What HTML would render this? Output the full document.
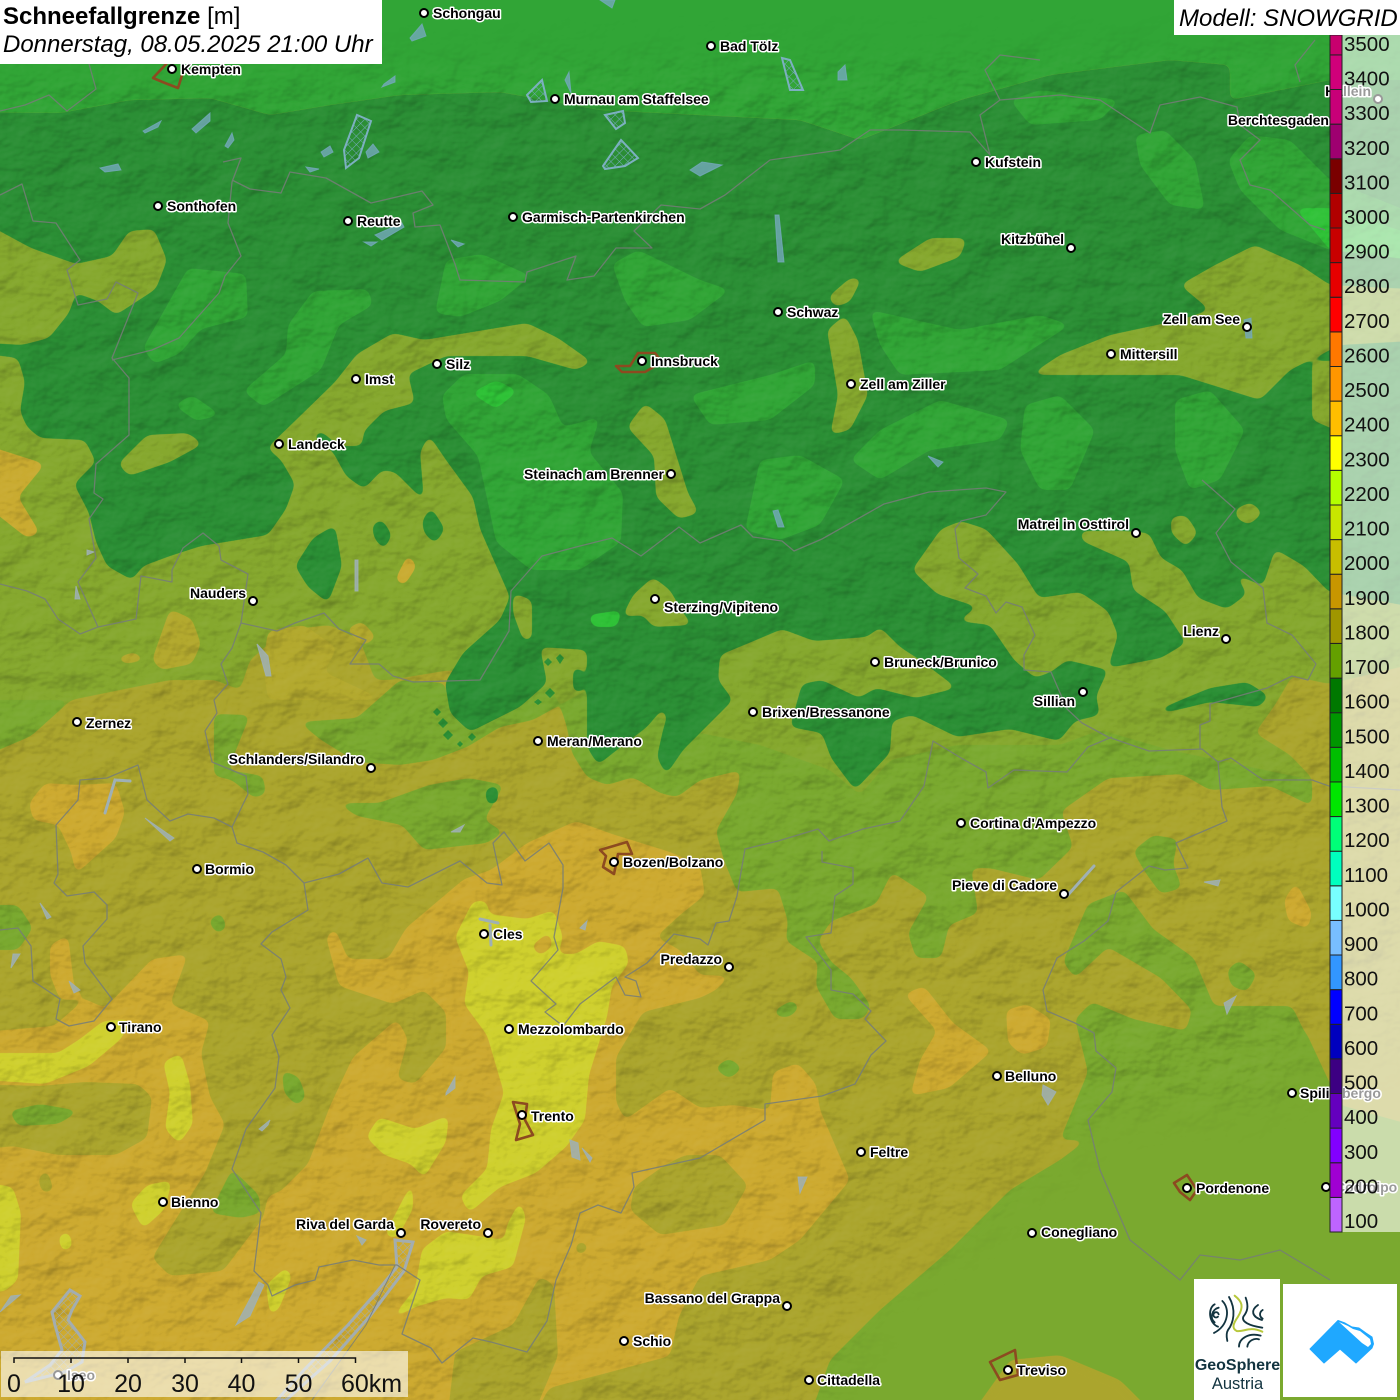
<!DOCTYPE html>
<html lang="de"><head><meta charset="utf-8"><title>Schneefallgrenze</title>
<style>
html,body{margin:0;padding:0;background:#fff;width:1400px;height:1400px;overflow:hidden}
svg{display:block;overflow:hidden}
.lb text{font:bold 14px "Liberation Sans",sans-serif;fill:#000;stroke:#fff;stroke-width:3px;paint-order:stroke;stroke-linejoin:round}
.lb circle{fill:#fff;stroke:#000;stroke-width:2}
.lg text{font:20.5px "Liberation Sans",sans-serif;fill:#111}
.lg rect{stroke:#222;stroke-width:1}
.sc text{font:25px "Liberation Sans",sans-serif;fill:#111}
</style></head><body>
<svg width="1400" height="1400" viewBox="0 0 1400 1400" xmlns="http://www.w3.org/2000/svg">
<defs>
<filter id="r" filterUnits="userSpaceOnUse" x="-60" y="-60" width="1520" height="1520" color-interpolation-filters="sRGB">
<feGaussianBlur stdDeviation="4"/><feComponentTransfer><feFuncA type="linear" slope="14" intercept="-6.5"/></feComponentTransfer>
</filter>
<filter id="hd" filterUnits="userSpaceOnUse" x="0" y="0" width="1400" height="1400" color-interpolation-filters="sRGB">
<feTurbulence type="fractalNoise" baseFrequency="0.022 0.028" numOctaves="4" seed="11"/>
<feDiffuseLighting surfaceScale="4" diffuseConstant="1" lighting-color="#fff"><feDistantLight azimuth="235" elevation="52"/></feDiffuseLighting>
<feColorMatrix values="0 0 0 0 0  0 0 0 0 0  0 0 0 0 0  -2 0 0 0 1.58"/>
</filter>
<filter id="hl" filterUnits="userSpaceOnUse" x="0" y="0" width="1400" height="1400" color-interpolation-filters="sRGB">
<feTurbulence type="fractalNoise" baseFrequency="0.022 0.028" numOctaves="4" seed="11"/>
<feDiffuseLighting surfaceScale="4" diffuseConstant="1" lighting-color="#fff"><feDistantLight azimuth="235" elevation="52"/></feDiffuseLighting>
<feColorMatrix values="0 0 0 0 1  0 0 0 0 1  0 0 0 0 1  2 0 0 0 -1.58"/>
</filter>
<filter id="bl" filterUnits="userSpaceOnUse" x="-60" y="-60" width="1520" height="1520"><feGaussianBlur stdDeviation="22"/></filter>
<mask id="mt" maskUnits="userSpaceOnUse" x="0" y="0" width="1400" height="1400"><polygon filter="url(#bl)" fill="#fff" points="-50,70 1450,50 1450,1060 1320,1040 1280,1100 1100,1110 1030,1180 950,1240 870,1300 800,1450 -50,1450"/></mask>
<pattern id="mesh" width="6" height="6" patternUnits="userSpaceOnUse" patternTransform="rotate(45)"><path d="M0 0H6M0 0V6" stroke="#74a9bb" stroke-width="1"/></pattern>
<pattern id="mesh2" width="6" height="6" patternUnits="userSpaceOnUse" patternTransform="rotate(45)"><path d="M0 0H6M0 0V6" stroke="#a3adb0" stroke-width="1"/></pattern>
</defs>

<!-- base -->
<rect width="1400" height="1400" fill="#aba52d"/>

<!-- gold -->
<g filter="url(#r)" fill="#cdaa30">
<polygon points="-30,1033 54,1026 85,999 105,1008 152,959 188,954 170,1004 210,1021 201,1053 210,1097 225,1124 205,1173 174,1222 152,1258 170,1276 223,1271 263,1218 268,1196 281,1191 308,1164 330,1106 353,1057 397,1019 408,1039 397,1079 415,1084 446,1048 446,1012 424,990 393,1004 339,986 326,937 335,928 348,959 388,959 406,928 464,879 491,870 527,843 576,821 612,834 670,852 700,865 705,895 680,915 656,937 680,950 700,975 730,976 716,990 700,998 643,1012 616,1057 616,1102 625,1120 670,1088 700,1108 733,1105 770,1110 773,1072 798,1063 816,1084 820,1110 850,1180 800,1240 770,1260 700,1276 679,1316 670,1356 603,1374 549,1388 527,1430 -30,1430"/>
<polygon points="29,803 45,783 76,785 116,783 125,812 116,838 76,874 71,852 58,825 33,820"/>
<polygon points="50,945 68,935 74,985 85,999 60,1000 50,975"/>
<polygon points="904,994 924,986 953,1023 992,1051 949,1088 910,1096 920,1060 937,1031"/>
<polygon points="1006,1010 1027,1004 1051,1019 1047,1047 1022,1055 1008,1043"/>
<polygon points="1296,882 1312,913 1308,929 1288,921 1284,900"/>
<polygon points="1247,631 1280,611 1308,615 1310,627 1284,662 1269,643"/>
</g>
<g filter="url(#r)" fill="#aba52d">
<polygon points="446,1430 455,1352 513,1325 540,1276 554,1285 558,1356 527,1430"/>
<polygon points="634,1187 665,1165 685,1155 720,1155 748,1185 725,1225 660,1235 630,1210"/>
<polygon points="-30,1084 40,1086 85,1082 138,1084 152,1097 147,1138 116,1155 58,1155 13,1146 -30,1151"/>
<polygon points="38,1178 47,1169 54,1191 42,1193"/>
<polygon points="574,1249 580,1240 590,1247 580,1256"/>
<polygon points="700,910 730,895 760,905 770,950 740,990 715,965"/>
</g>

<!-- north olive -->
<g filter="url(#r)" fill="#86a82e">
<polygon points="-30,-30 1430,-30 1430,660 1329,684 1292,676 1275,705 1255,733 1290,755 1312,778 1312,806 1271,786 1210,790 1182,774 1108,778 1061,811 1073,847 1039,880 990,868 971,868 978,913 949,925 941,958 916,958 908,933 929,896 892,872 876,904 831,921 818,941 831,962 851,978 871,1006 863,1019 835,1019 816,986 818,962 786,941 788,921 778,888 737,892 724,860 716,831 737,794 741,770 700,780 677,797 660,793 633,777 607,785 587,777 572,753 567,727 560,705 530,690 450,670 390,680 375,680 360,640 330,625 285,630 250,660 240,690 215,680 170,680 120,690 71,700 31,736 -30,762"/>
</g>
<g filter="url(#r)" fill="#b3a92e">
<polygon points="268,631 304,625 337,648 324,672 384,700 268,700 263,664"/>
<polygon points="152,660 170,609 192,619 201,644 192,664 161,670"/>
<polygon points="115,658 134,652 147,660 125,664"/>
<polygon points="346,629 362,621 377,638 362,646"/>
</g>
<g filter="url(#r)" fill="#c9ab30">
<polygon points="-30,440 45,464 18,497 40,533 27,538 -30,493"/>
<polygon points="395,580 408,554 417,566 404,586"/>
</g>

<!-- greens -->
<g filter="url(#r)" fill="#7aa92f">
<polygon points="1312,806 1271,786 1210,790 1182,774 1108,778 1061,811 1073,847 1039,880 990,868 971,868 978,913 949,925 941,958 916,958 908,933 929,896 892,872 876,904 831,921 818,941 831,962 851,978 871,1006 863,1019 835,1019 816,986 818,962 786,941 788,921 778,888 737,892 724,860 716,831 737,794 741,770 700,780 677,797 660,793 633,777 607,785 587,777 572,753 567,727 560,705 587,690 700,733 760,745 830,770 860,795 890,760 957,745 1060,745 1100,730 1170,750 1312,780"/>
<polygon points="400,680 445,683 450,713 470,732 520,707 547,683 560,705 533,720 500,727 467,747 433,760 400,765 357,762 321,740 299,722 357,718"/>
<polygon points="214,714 250,715 228,770 263,776 266,794 254,798 232,780 214,776"/>
<polygon points="-30,700 71,700 31,736 -30,762"/>
<polygon points="337,803 379,803 429,785 469,778 504,785 484,820 504,832 487,843 424,850 402,825 357,816"/>
<polygon points="-30,905 18,905 33,928 18,950 -30,950"/>
<polygon points="9,1111 40,1104 80,1111 58,1124 18,1126"/>
<polygon points="282,1070 299,1077 306,1097 297,1106 284,1093"/>
<polygon points="208,921 221,912 227,928 217,934"/>
<polygon points="210,1213 232,1169 259,1195 261,1213 241,1218"/>
<polygon points="1133,851 1153,835 1178,839 1173,864 1182,888 1161,894 1145,872"/>
<polygon points="1227,970 1239,960 1257,974 1247,992 1231,986"/>
<polygon points="773,1011 792,1000 800,1007 790,1017 778,1017"/>
<polygon points="714,1068 729,1058 743,1068 729,1079"/>
<polygon points="1075,978 1063,962 1088,904 1124,890 1153,929 1194,958 1214,1006 1292,1006 1304,1031 1305,1140 1060,1140 1088,1072 1075,1019 1092,1002 1133,1019 1186,1031 1192,1010 1161,978 1108,947"/>
<polygon points="1430,1130 1340,1105 1305,1030 1292,1130 1180,1125 1100,1130 1060,1160 1010,1190 950,1250 880,1310 830,1360 805,1430 1430,1430"/>
</g>
<g filter="url(#r)" fill="#aba52d"><polygon points="1010,1360 1060,1355 1120,1380 1170,1430 960,1430"/></g>

<!-- yellow -->
<g filter="url(#r)" fill="#cfd02e">
<polygon points="455,937 473,901 487,901 489,914 527,919 554,910 563,937 558,954 576,954 598,941 625,946 629,963 612,986 607,1017 589,1075 585,1120 567,1146 536,1173 500,1187 469,1213 460,1196 487,1169 491,1129 504,1093 487,1035 464,1004 469,972"/>
<polygon points="366,1137 379,1117 415,1129 449,1115 446,1142 424,1178 411,1164 384,1155"/>
<polygon points="-30,1053 58,1053 80,1039 103,1021 132,1019 121,1039 89,1066 45,1084 -30,1079"/>
<polygon points="163,1062 181,1053 190,1084 193,1124 179,1144 165,1129 170,1093"/>
<polygon points="130,1204 147,1185 172,1180 165,1209 143,1229"/>
<polygon points="-30,1180 13,1187 21,1213 18,1280 4,1292 -30,1290"/>
<polygon points="58,1236 69,1231 73,1247 62,1252"/>
<polygon points="384,1236 413,1180 413,1209 397,1238"/>
<polygon points="393,1316 415,1289 422,1249 446,1231 504,1240 507,1225 520,1200 526,1218 513,1267 482,1276 469,1300 446,1298 415,1307 395,1318"/>
<polygon points="266,1285 286,1267 292,1276 279,1309 270,1316"/>
</g>
<g filter="url(#r)" fill="#cdaa30"><polygon points="531,946 549,932 553,946 540,956"/></g>

<!-- dark 1600 -->
<g filter="url(#r)" fill="#2b8f35">
<polygon points="-30,112 60,113 130,100 210,98 270,115 330,105 400,95 500,92 600,110 700,115 800,120 860,140 960,100 1050,75 1170,60 1230,65 1230,100 1330,80 1430,75 1430,610 1329,592 1304,566 1275,549 1263,586 1235,574 1247,594 1227,609 1198,598 1182,570 1161,558 1149,533 1124,531 1080,531 1082,541 1129,562 1133,590 1165,611 1186,643 1161,658 1108,668 1118,635 1108,611 1080,592 1039,598 1018,564 986,529 961,521 941,529 912,570 937,594 978,607 957,621 990,625 1014,660 1035,678 1051,672 1067,660 1108,670 1096,696 1100,715 1075,721 1059,741 1010,729 957,737 912,715 892,721 890,753 855,790 831,758 822,733 790,727 802,684 822,680 859,698 876,688 916,698 957,688 920,660 900,647 880,627 867,637 814,641 782,629 749,643 720,655 718,680 733,700 700,733 683,750 666,775 657,757 663,730 667,717 663,708 647,727 613,753 598,765 587,747 587,650 540,647 547,683 520,707 470,732 450,713 445,683 463,653 500,620 510,597 480,529 473,497 446,460 429,435 420,452 424,501 395,472 382,470 364,489 346,476 333,452 312,436 321,431 339,446 362,446 364,431 384,411 415,403 408,374 446,356 527,356 576,370 592,362 558,338 527,323 424,340 393,333 357,354 335,382 297,419 267,448 281,460 295,484 286,509 268,535 201,546 170,556 143,566 132,580 107,566 96,542 89,513 74,484 96,462 85,440 40,438 27,427 20,411 25,382 18,358 -30,352"/>
<polygon points="1159,709 1210,688 1247,682 1269,696 1259,707 1210,702 1165,713"/>
<polygon points="295,566 313,538 335,525 342,566 328,603 308,587"/>
<polygon points="372,525 382,519 392,535 384,550 374,538"/>
<polygon points="422,521 431,507 445,529 435,544 424,533"/>
<polygon points="573,667 583,670 583,692 573,692"/>
<polygon points="485,789 498,785 498,803 487,805"/>
</g>
<g fill="#2b8f35">
<polygon points="437,708 441,712 437,716 433,712"/><polygon points="443,718 448,723 443,728 438,723"/><polygon points="448,730 453,735 448,740 443,735"/><polygon points="472,733 476,737 472,741 468,737"/><polygon points="460,741 463,744 460,747 457,744"/><polygon points="548,658 552,662 548,666 544,662"/><polygon points="560,654 564,658 560,664 556,658"/><polygon points="550,688 555,693 550,698 545,693"/><polygon points="538,699 542,702 538,705 534,702"/>
</g>
<!-- olive on dark -->
<g filter="url(#r)" fill="#86a82e">
<polygon points="-30,215 31,248 76,264 112,256 129,231 154,229 167,260 156,289 116,315 98,301 76,293 69,313 49,338 22,345 -30,342"/>
<polygon points="118,464 147,435 188,433 203,444 170,462 129,476"/>
<polygon points="1180,285 1215,265 1255,245 1300,265 1330,285 1430,290 1430,340 1340,345 1290,370 1260,400 1180,375 1115,375 1030,375 1060,355 1110,335 1180,320 1210,310"/>
<polygon points="1312,362 1340,360 1340,432 1312,420"/>
<polygon points="893,262 930,238 967,238 960,257 920,272"/>
<polygon points="828,297 850,278 862,278 850,302 835,307"/>
<polygon points="827,330 845,315 858,340 868,395 850,430 830,435 838,395"/>
<polygon points="627,427 645,403 665,419 688,493 699,513 679,519 656,497 654,456"/>
<polygon points="622,617 633,595 653,577 670,590 683,613 693,625 653,627 643,615"/>
<polygon points="513,593 532,600 532,640 523,640 513,613"/>
<polygon points="1171,517 1186,515 1198,533 1186,547 1171,533"/>
<polygon points="1235,509 1251,502 1263,513 1249,525 1237,519"/>
</g>

<!-- light 1500 -->
<g filter="url(#r)" fill="#31a536">
<polygon points="-30,-30 1430,-30 1430,80 1330,80 1230,100 1230,65 1170,60 1050,75 960,100 860,140 800,120 700,115 600,110 500,92 400,95 330,105 270,115 210,98 130,100 60,113 -30,112"/>
<polygon points="442,395 464,374 518,374 549,395 563,427 600,417 589,452 623,493 621,542 580,570 531,570 496,542 491,517 478,456 446,419"/>
<polygon points="612,264 638,250 700,280 730,290 690,320 643,327 625,301"/>
<polygon points="243,391 286,354 288,325 313,291 368,289 373,305 339,325 321,370 263,407"/>
<polygon points="143,348 188,268 246,274 248,317 201,329 179,354 154,364"/>
<polygon points="435,313 446,260 482,254 531,276 500,301 460,317"/>
<polygon points="870,310 960,330 1040,315 1070,325 1000,370 900,375 880,345"/>
<polygon points="690,395 770,375 815,360 815,385 770,420 710,425"/>
<polygon points="760,460 800,455 845,480 820,525 780,540 745,530"/>
<polygon points="1025,405 1060,395 1095,430 1070,490 1040,490 1020,450"/>
<polygon points="1175,400 1210,390 1245,430 1220,480 1190,490 1175,450"/>
<polygon points="850,460 880,430 940,400 1010,420 1000,440 930,450 880,480"/>
<polygon points="174,405 192,395 221,415 196,421"/>
<polygon points="1135,135 1165,130 1195,160 1205,210 1170,205 1140,165"/>
<polygon points="1228,160 1250,135 1290,140 1330,180 1430,220 1430,260 1330,250 1280,230 1240,190"/>
<polygon points="1010,100 1040,90 1120,100 1100,120 1030,125"/>
</g>
<g filter="url(#r)" fill="#2fc237">
<polygon points="471,393 496,380 518,391 496,409"/>
<polygon points="1295,208 1330,208 1430,240 1430,262 1330,250"/>
<polygon points="588,615 622,610 617,627 593,627"/>
</g>

<!-- hillshade -->
<g mask="url(#mt)">
<rect width="1400" height="1400" filter="url(#hd)" opacity=".3"/>
<rect width="1400" height="1400" filter="url(#hl)" opacity=".12"/>
</g>

<!-- lakes -->
<g fill="#74a9bb" fill-opacity=".8" stroke="#74a9bb" stroke-opacity=".8">
<polygon points="143,131 161,121 158,127 145,133"/>
<polygon points="192,129 210,113 210,121 196,133"/>
<polygon points="225,146 232,133 234,140 228,148"/>
<polygon points="100,168 118,164 121,170 105,172"/>
<polygon points="321,152 330,146 333,152 324,157"/>
<polygon points="366,152 373,144 379,152 368,158"/>
<polygon points="306,167 319,169 310,172"/>
<polygon points="384,84 395,76 395,82 382,87"/>
<polygon points="410,38 422,24 426,36 412,41"/>
<polygon points="565,80 569,72 571,93"/>
<polygon points="838,72 845,65 847,80 838,80"/>
<polygon points="690,170 702,162 722,165 700,176"/>
<polygon points="775,215 779,215 784,262 778,262"/>
<polygon points="600,0 615,0 612,8"/>
<polygon points="375,235 402,223 404,227 382,240"/>
<polygon points="364,242 377,242 371,246"/>
<polygon points="451,240 464,244 458,247"/>
<polygon points="928,456 943,462 938,467"/>
<polygon points="773,511 778,510 784,527 778,527"/>
<polygon points="1244,320 1251,318 1252,338 1246,338"/>
</g>
<g fill="url(#mesh)" stroke="#7cb0c0" stroke-width="2">
<polygon points="344,150 357,115 371,121 359,158 346,168"/>
<polygon points="527,95 542,80 547,101 531,102"/>
<polygon points="605,115 623,111 625,123 616,129"/>
<polygon points="603,166 621,140 638,158 625,166 605,169"/>
<polygon points="782,58 790,60 803,90 790,90"/>
</g>
<g fill="#9fb0b5" stroke="#9fb0b5" fill-opacity=".85" stroke-opacity=".85">
<polygon points="355,560 358,560 358,591 355,591"/>
<polygon points="257,644 268,656 271,676 266,676"/>
<polygon points="76,586 80,599 75,599"/>
<polygon points="87,550 94,552 87,555"/>
<polygon points="145,818 174,838 170,841"/>
<polygon points="451,832 464,825 460,832"/>
<polygon points="40,903 51,917 47,919"/>
<polygon points="13,954 20,954 11,968"/>
<polygon points="69,981 80,990 74,993"/>
<polygon points="446,1093 455,1077 455,1088 446,1095"/>
<polygon points="259,1129 270,1120 268,1125 262,1131"/>
<polygon points="580,928 587,921 585,930"/>
<polygon points="570,1140 578,1143 580,1160 572,1157"/>
<polygon points="582,1148 592,1158 590,1162"/>
<polygon points="357,1236 366,1240 362,1245"/>
<polygon points="259,1282 264,1285 250,1316 236,1325"/>
<polygon points="0,1312 11,1296 20,1295"/>
<polygon points="1204,882 1220,880 1218,886"/>
<polygon points="1224,1003 1236,996 1227,1014"/>
<polygon points="798,1177 807,1177 800,1193"/>
<polygon points="1043,1085 1056,1092 1048,1105 1042,1095"/>
</g>
<g fill="none" stroke="#9fb0b5" stroke-width="3" stroke-linecap="round">
<path d="M105 813L115 780 130 781"/><path d="M480 919L498 923M490 925L491 945"/><path d="M1067 896L1094 866"/>
</g>
<g fill="url(#mesh2)" stroke="#a3adb0" stroke-width="3">
<polygon points="395,1240 413,1242 404,1271 370,1316 330,1361 286,1400 277,1400 304,1370 348,1325 375,1294 397,1267"/>
<polygon points="70,1290 80,1296 72,1310 68,1320 85,1342 82,1362 65,1372 25,1382 50,1365 62,1350 55,1325 52,1312"/>
</g>

<!-- borders -->
<g fill="none" stroke="#767d78" stroke-width="1.300" stroke-linejoin="round" opacity=".85">
<path d="M0 195L22 184 33 221 56 223 80 260 67 270 78 305 107 299 116 282 138 293 112 358 129 378 129 435 96 464 94 493 103 499 89 519 96 558 78 582 98 627 80 634 58 619 45 599 27 591 0 584"/>
<path d="M89 64L96 89 67 111 49 95 25 105 0 111"/>
<path d="M223 162L241 158 232 182 228 223 241 256 225 276 219 293 179 338 152 350 112 360"/>
<path d="M232 180L250 189 281 193 290 172 326 178 371 203 422 191 433 205 413 213 415 227 440 225 455 264 460 280 525 282 527 272 576 256 567 280 594 276 616 248 652 248 634 231 661 205 700 209 725 195 770 160 840 150 870 130 900 130 970 132 990 155 980 115 1000 100 1060 95 1100 100 1150 133 1160 105 1200 97 1237 107 1240 125 1260 140 1240 160 1250 185 1270 190 1310 225 1325 230"/>
<path d="M1000 100L985 70 1000 55 1040 60"/><path d="M1300 82L1295 65 1315 40"/>
<path d="M219 546L203 533 183 548 172 570 172 582 141 576 136 619 98 627"/>
<path d="M219 546L221 560 248 574 241 623 232 648 221 664 228 684 214 700 217 713 205 731 212 762 246 776 248 794 232 827"/>
<path d="M241 623L277 631 295 623 324 613 339 629 366 640 350 664 379 664 393 676 413 682 480 680 509 631 511 591 542 556 580 546 612 538 641 556 679 527 700 543 741 525 753 537 782 541 794 551 822 539 884 504 929 492 986 488 1006 492 986 515 961 521 955 529 959 558 978 574 965 588 986 596 996 613 1006 602 1022 607 1035 635 1024 655 1024 670 1051 672 1067 709 1082 723 1108 737 1149 751 1202 749 1218 762 1231 758 1263 780 1312 780 1329 786 1400 790"/>
<path d="M1202 480L1235 509 1216 533 1231 562 1263 588 1267 623 1292 635 1316 664 1308 680 1292 676 1267 688 1210 704 1210 721 1200 725 1200 749"/>
<path d="M232 827L214 818 188 814 170 821 147 800 138 765 107 778 80 780 78 800 56 825 58 874 54 883 67 896 94 892 107 905 107 919 83 946 85 963 112 999 94 1021 69 1026 56 1019 60 999 33 981 31 946 18 928 0 930"/>
<path d="M232 827L237 843 263 852 286 865 304 883 308 910 272 932 261 944 281 959 286 977 281 990 290 1008 272 1035 279 1057 275 1088 246 1129 232 1169 261 1213 254 1271 268 1285 272 1296 295 1285 315 1280 319 1267 353 1260 379 1265 397 1265 420 1280 402 1334 431 1348 442 1363 473 1338 491 1342 527 1352 547 1321 556 1280 571 1245 580 1213 598 1205 621 1213 634 1187 632 1173 700 1158 765 1120 765 1104 822 1096 855 1084 871 1055 886 1041 865 1019 871 1011 853 994 831 990 831 970 806 937 831 933 835 896 853 884 853 868 822 862 822 851"/>
<path d="M304 883L339 874 368 858 382 883 408 887 420 881 460 861 487 883 502 885 493 843 504 832 525 861 549 843 563 865 563 888 554 937 558 950 531 981 556 1004 545 1012 563 1026 580 1004 616 977 625 995 641 997 636 981 625 977 647 963 674 934 700 939 708 945 716 923 729 921 737 896 741 872 745 849 778 841 818 829 829 841 863 829 900 821 924 786 933 741 961 758 986 772 988 788 1014 770 1067 772 1088 747 1112 737"/>
<path d="M1218 762L1222 807 1227 821 1176 843 1188 868 1165 870 1149 866 1116 892 1108 921 1084 941 1057 958 1043 990 1047 1011 1075 1023 1094 1033 1096 1051 1116 1068 1112 1092 1088 1120 1100 1170 1130 1240 1180 1280 1200 1255 1240 1260 1280 1250 1330 1280"/>
<path d="M395 1265L366 1325 312 1400" stroke-width="1"/>
</g>

<!-- city outlines -->
<g fill="none" stroke="#8c4a20" stroke-width="2.600" stroke-linejoin="round">
<path d="M168 62L153 78 165 83 178 88 183 72"/>
<path d="M616 366L630 366 638 353 655 353 662 362 645 372 622 372z"/>
<path d="M600 850L627 842 632 854 618 854 614 874 603 867 606 856z"/>
<path d="M513 1102L527 1104 525 1120 533 1135 516 1140 520 1124z"/>
<path d="M1174 1183L1187 1175 1197 1190 1190 1200 1180 1192z"/>
<path d="M990 1362L1015 1350 1018 1375 1000 1380z"/>
</g>

<!-- cities -->
<g class="lb">
<circle cx="424" cy="13" r="4"/><text x="433" y="18">Schongau</text>
<circle cx="711" cy="46" r="4"/><text x="720" y="51">Bad Tölz</text>
<circle cx="172" cy="69" r="4"/><text x="181" y="74">Kempten</text>
<circle cx="555" cy="99" r="4"/><text x="564" y="104">Murnau am Staffelsee</text>
<circle cx="1378" cy="99" r="4"/><text x="1371" y="96" text-anchor="end">Hallein</text>
<text x="1329" y="125" text-anchor="end">Berchtesgaden</text>
<circle cx="976" cy="162" r="4"/><text x="985" y="167">Kufstein</text>
<circle cx="158" cy="206" r="4"/><text x="167" y="211">Sonthofen</text>
<circle cx="348" cy="221" r="4"/><text x="357" y="226">Reutte</text>
<circle cx="513" cy="217" r="4"/><text x="522" y="222">Garmisch-Partenkirchen</text>
<circle cx="1071" cy="248" r="4"/><text x="1064" y="244" text-anchor="end">Kitzbühel</text>
<circle cx="778" cy="312" r="4"/><text x="787" y="317">Schwaz</text>
<circle cx="1247" cy="327" r="4"/><text x="1240" y="324" text-anchor="end">Zell am See</text>
<circle cx="1111" cy="354" r="4"/><text x="1120" y="359">Mittersill</text>
<circle cx="642" cy="361" r="4"/><text x="651" y="366">Innsbruck</text>
<circle cx="437" cy="364" r="4"/><text x="446" y="369">Silz</text>
<circle cx="356" cy="379" r="4"/><text x="365" y="384">Imst</text>
<circle cx="851" cy="384" r="4"/><text x="860" y="389">Zell am Ziller</text>
<circle cx="279" cy="444" r="4"/><text x="288" y="449">Landeck</text>
<circle cx="671" cy="474" r="4"/><text x="664" y="479" text-anchor="end">Steinach am Brenner</text>
<circle cx="1136" cy="533" r="4"/><text x="1129" y="529" text-anchor="end">Matrei in Osttirol</text>
<circle cx="253" cy="601" r="4"/><text x="246" y="598" text-anchor="end">Nauders</text>
<circle cx="655" cy="599" r="4"/><text x="664" y="612">Sterzing/Vipiteno</text>
<circle cx="1226" cy="639" r="4"/><text x="1219" y="636" text-anchor="end">Lienz</text>
<circle cx="875" cy="662" r="4"/><text x="884" y="667">Bruneck/Brunico</text>
<circle cx="1083" cy="692" r="4"/><text x="1075" y="706" text-anchor="end">Sillian</text>
<circle cx="753" cy="712" r="4"/><text x="762" y="717">Brixen/Bressanone</text>
<circle cx="77" cy="722" r="4"/><text x="86" y="728">Zernez</text>
<circle cx="538" cy="741" r="4"/><text x="547" y="746">Meran/Merano</text>
<circle cx="371" cy="768" r="4"/><text x="364" y="764" text-anchor="end">Schlanders/Silandro</text>
<circle cx="961" cy="823" r="4"/><text x="970" y="828">Cortina d'Ampezzo</text>
<circle cx="614" cy="862" r="4"/><text x="623" y="867">Bozen/Bolzano</text>
<circle cx="197" cy="869" r="4"/><text x="205" y="874">Bormio</text>
<circle cx="1064" cy="894" r="4"/><text x="1057" y="890" text-anchor="end">Pieve di Cadore</text>
<circle cx="484" cy="934" r="4"/><text x="493" y="939">Cles</text>
<circle cx="729" cy="967" r="4"/><text x="722" y="964" text-anchor="end">Predazzo</text>
<circle cx="111" cy="1027" r="4"/><text x="119" y="1032">Tirano</text>
<circle cx="509" cy="1029" r="4"/><text x="518" y="1034">Mezzolombardo</text>
<circle cx="997" cy="1076" r="4"/><text x="1005" y="1081">Belluno</text>
<circle cx="1292" cy="1093" r="4"/><text x="1300" y="1098">Spilimbergo</text>
<circle cx="522" cy="1115" r="4"/><text x="531" y="1121">Trento</text>
<circle cx="861" cy="1152" r="4"/><text x="870" y="1157">Feltre</text>
<circle cx="1187" cy="1188" r="4"/><text x="1196" y="1193">Pordenone</text>
<circle cx="1326" cy="1187" r="4"/><text x="1335" y="1192">Codroipo</text>
<circle cx="163" cy="1202" r="4"/><text x="171" y="1207">Bienno</text>
<circle cx="401" cy="1233" r="4"/><text x="394" y="1229" text-anchor="end">Riva del Garda</text>
<circle cx="488" cy="1233" r="4"/><text x="481" y="1229" text-anchor="end">Rovereto</text>
<circle cx="1032" cy="1233" r="4"/><text x="1041" y="1237">Conegliano</text>
<circle cx="787" cy="1306" r="4"/><text x="780" y="1303" text-anchor="end">Bassano del Grappa</text>
<circle cx="624" cy="1341" r="4"/><text x="633" y="1346">Schio</text>
<circle cx="1008" cy="1370" r="4"/><text x="1017" y="1375">Treviso</text>
<circle cx="809" cy="1380" r="4"/><text x="817" y="1385">Cittadella</text>
<circle cx="58" cy="1375" r="4"/><text x="67" y="1380">Iseo</text>
</g>

<!-- legend -->
<rect x="1342" y="35" width="58" height="1197" fill="#fff" opacity=".6"/>
<g class="lg">
<rect x="1330" y="1197.4" width="12" height="34.6" fill="#be64ff"/><text x="1344" y="1228">100</text>
<rect x="1330" y="1162.8" width="12" height="34.6" fill="#a000d2"/><text x="1344" y="1193.4">200</text>
<rect x="1330" y="1128.1" width="12" height="34.6" fill="#8200ff"/><text x="1344" y="1158.8">300</text>
<rect x="1330" y="1093.5" width="12" height="34.6" fill="#6400be"/><text x="1344" y="1124.1">400</text>
<rect x="1330" y="1058.9" width="12" height="34.6" fill="#3c0082"/><text x="1344" y="1089.5">500</text>
<rect x="1330" y="1024.3" width="12" height="34.6" fill="#0000be"/><text x="1344" y="1054.9">600</text>
<rect x="1330" y="989.7" width="12" height="34.6" fill="#0000ff"/><text x="1344" y="1020.3">700</text>
<rect x="1330" y="955" width="12" height="34.6" fill="#3296ff"/><text x="1344" y="985.7">800</text>
<rect x="1330" y="920.4" width="12" height="34.6" fill="#78beff"/><text x="1344" y="951">900</text>
<rect x="1330" y="885.8" width="12" height="34.6" fill="#78ffff"/><text x="1344" y="916.4">1000</text>
<rect x="1330" y="851.2" width="12" height="34.6" fill="#00ffbe"/><text x="1344" y="881.8">1100</text>
<rect x="1330" y="816.6" width="12" height="34.6" fill="#00ff78"/><text x="1344" y="847.2">1200</text>
<rect x="1330" y="781.9" width="12" height="34.6" fill="#00e600"/><text x="1344" y="812.6">1300</text>
<rect x="1330" y="747.3" width="12" height="34.6" fill="#00be00"/><text x="1344" y="777.9">1400</text>
<rect x="1330" y="712.7" width="12" height="34.6" fill="#009600"/><text x="1344" y="743.3">1500</text>
<rect x="1330" y="678.1" width="12" height="34.6" fill="#007800"/><text x="1344" y="708.7">1600</text>
<rect x="1330" y="643.5" width="12" height="34.6" fill="#64a000"/><text x="1344" y="674.1">1700</text>
<rect x="1330" y="608.8" width="12" height="34.6" fill="#a09600"/><text x="1344" y="639.5">1800</text>
<rect x="1330" y="574.2" width="12" height="34.6" fill="#c89600"/><text x="1344" y="604.8">1900</text>
<rect x="1330" y="539.6" width="12" height="34.6" fill="#c8be00"/><text x="1344" y="570.2">2000</text>
<rect x="1330" y="505" width="12" height="34.6" fill="#c8e600"/><text x="1344" y="535.6">2100</text>
<rect x="1330" y="470.4" width="12" height="34.6" fill="#b4ff00"/><text x="1344" y="501">2200</text>
<rect x="1330" y="435.7" width="12" height="34.6" fill="#ffff00"/><text x="1344" y="466.4">2300</text>
<rect x="1330" y="401.1" width="12" height="34.6" fill="#ffbe00"/><text x="1344" y="431.7">2400</text>
<rect x="1330" y="366.5" width="12" height="34.6" fill="#ff9600"/><text x="1344" y="397.1">2500</text>
<rect x="1330" y="331.9" width="12" height="34.6" fill="#ff7800"/><text x="1344" y="362.5">2600</text>
<rect x="1330" y="297.3" width="12" height="34.6" fill="#ff0000"/><text x="1344" y="327.9">2700</text>
<rect x="1330" y="262.6" width="12" height="34.6" fill="#e60000"/><text x="1344" y="293.2">2800</text>
<rect x="1330" y="228" width="12" height="34.6" fill="#c80000"/><text x="1344" y="258.6">2900</text>
<rect x="1330" y="193.4" width="12" height="34.6" fill="#b00000"/><text x="1344" y="224">3000</text>
<rect x="1330" y="158.8" width="12" height="34.6" fill="#7a0000"/><text x="1344" y="189.4">3100</text>
<rect x="1330" y="124.2" width="12" height="34.6" fill="#9e0070"/><text x="1344" y="154.8">3200</text>
<rect x="1330" y="89.5" width="12" height="34.6" fill="#c80078"/><text x="1344" y="120.2">3300</text>
<rect x="1330" y="54.9" width="12" height="34.6" fill="#d0007a"/><text x="1344" y="85.5">3400</text>
<rect x="1330" y="20.3" width="12" height="14.7" fill="#c8006e"/><text x="1344" y="50.9">3500</text>
<rect x="1330" y="35" width="12" height="19.9" fill="#c8006e"/>
</g>

<!-- headers -->
<rect x="0" y="0" width="382" height="64" fill="#fff"/>
<text x="3" y="24" style='font:bold 24px "Liberation Sans",sans-serif' fill="#000">Schneefallgrenze <tspan font-weight="normal">[m]</tspan></text>
<text x="3" y="52" style='font:italic 24px "Liberation Sans",sans-serif' fill="#000">Donnerstag, 08.05.2025 21:00 Uhr</text>
<rect x="1174" y="0" width="226" height="35" fill="#fff"/>
<text x="1179" y="26" style='font:italic 24px "Liberation Sans",sans-serif' fill="#000">Modell: SNOWGRID</text>

<!-- scale -->
<rect x="1" y="1351" width="407" height="46" fill="#fff" opacity=".6"/>
<g class="sc">
<path d="M14 1363V1358H355.500V1363M71 1358V1363M128 1358V1363M185 1358V1363M241.500 1358V1363M298.500 1358V1363" fill="none" stroke="#111" stroke-width="1.500"/>
<text x="14" y="1392" text-anchor="middle">0</text><text x="71" y="1392" text-anchor="middle">10</text>
<text x="128" y="1392" text-anchor="middle">20</text><text x="185" y="1392" text-anchor="middle">30</text>
<text x="241.500" y="1392" text-anchor="middle">40</text><text x="298.500" y="1392" text-anchor="middle">50</text>
<text x="341" y="1392">60km</text>
</g>

<!-- logos -->
<rect x="1194" y="1279" width="86" height="121" fill="#fff"/>
<rect x="1283" y="1284" width="114" height="113" fill="#fff"/>
<g transform="translate(1194 1285) scale(.3333)" fill="none" stroke="#12333f" stroke-width="5.500" stroke-linecap="round">
<path d="M74 88a8 8 0 1 0-2 7"/>
<path d="M74 68C54 72 46 100 62 112"/>
<path d="M62 58C40 70 45 115 72 125"/>
<path d="M85 48C108 70 105 120 60 144"/>
<path d="M105 36C128 75 118 115 102 135 94 148 100 165 100 168"/>
<path d="M155 38C165 65 160 80 148 95 142 110 165 122 205 128"/>
<path d="M192 60C170 75 172 95 204 105"/>
<path d="M206 75C195 82 196 95 206 101"/>
<path d="M135 185C135 160 165 142 200 152"/>
<path d="M160 185C162 168 180 158 195 163"/>
<path stroke="#b8c83c" stroke-width="6" d="M122 32C145 50 150 65 132 95 118 115 112 130 128 138 150 142 165 122 205 140"/>
</g>
<text x="1237.500" y="1370" text-anchor="middle" style='font:bold 16px "Liberation Sans",sans-serif' fill="#12333f">GeoSphere</text>
<text x="1237.500" y="1389" text-anchor="middle" style='font:16.500px "Liberation Sans",sans-serif' fill="#12333f">Austria</text>
<path d="M1310 1349L1338 1320.500 1345 1323 1352 1327 1359 1328 1366 1333 1372 1337 1373.500 1344 1372 1348 1356 1363 1340 1349 1324 1363z" fill="#1fa8ff" stroke="#1fa8ff" stroke-width="1" stroke-linejoin="round"/>
<path d="M1339 1322L1348 1326 1353 1329 1360 1331 1365 1335 1370 1339 1371 1344 1368 1347 1362 1343z" fill="#fff"/>
</svg>
</body></html>
